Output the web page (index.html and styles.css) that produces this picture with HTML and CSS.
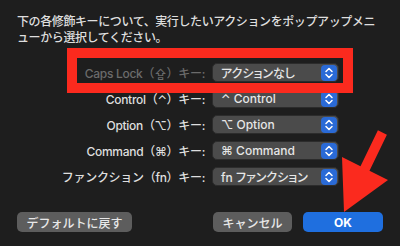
FILE: index.html
```html
<!DOCTYPE html>
<html lang="ja">
<head>
    <meta charset="UTF-8">
    <meta name="viewport" content="width=device-width, initial-scale=1.0">
    <title>修飾キー</title>
    <link rel="stylesheet" href="styles.css">
</head>
<body>
    <div class="dialog">
        <p class="message">下の各修飾キーについて、実行したいアクションをポップアップメニ<br>ューから選択してください。</p>

        <div class="rows">
            <div class="label disabled">Caps Lock（⇪）キー:</div>
            <div class="popup">
                <span class="popup-text">アクションなし</span>
                <span class="stepper"><svg viewBox="0 0 16 16" width="16" height="16"><path d="M5 6.5 8 3.5 11 6.5M5 9.5 8 12.5 11 9.5" fill="none" stroke="#fff" stroke-width="1.5" stroke-linecap="round" stroke-linejoin="round"/></svg></span>
            </div>

            <div class="label">Control（⌃）キー:</div>
            <div class="popup">
                <span class="popup-text">⌃ Control</span>
                <span class="stepper"><svg viewBox="0 0 16 16" width="16" height="16"><path d="M5 6.5 8 3.5 11 6.5M5 9.5 8 12.5 11 9.5" fill="none" stroke="#fff" stroke-width="1.5" stroke-linecap="round" stroke-linejoin="round"/></svg></span>
            </div>

            <div class="label">Option（⌥）キー:</div>
            <div class="popup">
                <span class="popup-text">⌥ Option</span>
                <span class="stepper"><svg viewBox="0 0 16 16" width="16" height="16"><path d="M5 6.5 8 3.5 11 6.5M5 9.5 8 12.5 11 9.5" fill="none" stroke="#fff" stroke-width="1.5" stroke-linecap="round" stroke-linejoin="round"/></svg></span>
            </div>

            <div class="label">Command（⌘）キー:</div>
            <div class="popup">
                <span class="popup-text">⌘ Command</span>
                <span class="stepper"><svg viewBox="0 0 16 16" width="16" height="16"><path d="M5 6.5 8 3.5 11 6.5M5 9.5 8 12.5 11 9.5" fill="none" stroke="#fff" stroke-width="1.5" stroke-linecap="round" stroke-linejoin="round"/></svg></span>
            </div>

            <div class="label">ファンクション（fn）キー:</div>
            <div class="popup">
                <span class="popup-text">fn ファンクション</span>
                <span class="stepper"><svg viewBox="0 0 16 16" width="16" height="16"><path d="M5 6.5 8 3.5 11 6.5M5 9.5 8 12.5 11 9.5" fill="none" stroke="#fff" stroke-width="1.5" stroke-linecap="round" stroke-linejoin="round"/></svg></span>
            </div>
        </div>

        <div class="buttons">
            <button class="btn btn-default">デフォルトに戻す</button>
            <div class="spacer"></div>
            <button class="btn btn-cancel">キャンセル</button>
            <button class="btn btn-ok">OK</button>
        </div>

        <!-- annotation overlay -->
        <div class="highlight"></div>
        <svg class="arrow" viewBox="0 0 400 246" width="400" height="246">
            <polygon points="377.9,130.3 360.5,166.3 342,157 344,212 388,180 369.5,170.7 386.9,134.7" fill="#fb2a1e"/>
        </svg>
    </div>
</body>
</html>
```

FILE: styles.css
```css
body {
    margin: 0;
    background-color: #1e1e1e;
    font-family: "Inter", "Noto Sans CJK JP", "DejaVu Sans", sans-serif;
    color: #dedede;
}
.dialog {
    position: relative;
    width: 400px;
    height: 246px;
    box-sizing: border-box;
    padding: 14px 17px;
    overflow: hidden;
}
.message {
    margin: 0;
    font-size: 12px;
    line-height: 16px;
    font-weight: 500;
    letter-spacing: -0.4px;
    white-space: nowrap;
}
.rows {
    display: grid;
    grid-template-columns: 188px 127px;
    grid-auto-rows: 19px;
    column-gap: 7px;
    row-gap: 7px;
    margin-top: 17px;
    align-items: center;
}
.label {
    text-align: right;
    font-size: 12px;
    font-weight: 500;
    letter-spacing: -0.3px;
    white-space: nowrap;
}
.label.disabled {
    color: #6b6b6b;
}
.popup {
    display: flex;
    align-items: center;
    justify-content: space-between;
    height: 19px;
    box-sizing: border-box;
    padding: 0 1px 0 8px;
    background: #4b4b4b;
    border: 1px solid #2c2c2c;
    border-radius: 5px;
    font-size: 12px;
    font-weight: 500;
    color: #e6e6e6;
}
.popup-text {
    white-space: nowrap;
    font-feature-settings: "palt";
}
.stepper {
    display: flex;
    width: 16px;
    height: 16px;
    background: #2a6ad6;
    border-radius: 4px;
}
.buttons {
    display: flex;
    align-items: center;
    gap: 11px;
    margin-top: 26px;
}
.spacer {
    flex: 1;
}
.btn {
    height: 20px;
    padding: 0;
    border: none;
    border-radius: 5px;
    background: #5d5d5d;
    color: #e8e8e8;
    font-family: inherit;
    font-size: 12px;
    font-weight: 500;
}
.btn-default {
    width: 115px;
}
.btn-cancel {
    width: 79px;
}
.btn-ok {
    width: 80px;
    background: #1f6fdf;
    color: #fff;
    font-weight: 700;
}
.highlight {
    position: absolute;
    left: 67px;
    top: 48px;
    width: 286px;
    height: 45px;
    box-sizing: border-box;
    border: 10px solid #fb2a1e;
}
.arrow {
    position: absolute;
    left: 0;
    top: 0;
    pointer-events: none;
}
```
